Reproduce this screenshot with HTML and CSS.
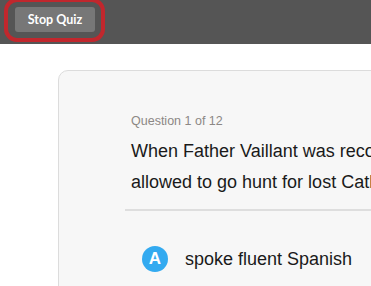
FILE: index.html
```html
<!DOCTYPE html>
<html>
<head>
<meta charset="utf-8">
<link rel="stylesheet" href="styles.css">
</head>
<body>
<header class="topbar">
  <div class="btn-wrap">
    <button class="stop-btn">Stop Quiz</button>
    <span class="highlight-ring"></span>
  </div>
</header>
<main class="stage">
  <section class="card">
    <div class="question-head">
      <div class="counter">Question 1 of 12</div>
      <div class="question">When Father Vaillant was recovering from his illness he was<br>allowed to go hunt for lost Catholics</div>
    </div>
    <div class="options">
      <div class="option">
        <span class="letter">A</span>
        <span class="answer">spoke fluent Spanish</span>
      </div>
    </div>
  </section>
</main>
</body>
</html>
```
FILE: styles.css
```css
html, body {
  margin: 0;
  padding: 0;
  background: #ffffff;
  overflow: hidden;
  width: 371px;
  height: 286px;
}
.topbar {
  height: 44px;
  background: #555555;
  display: flex;
  align-items: flex-start;
  padding: 7px 0 0 15px;
  box-sizing: border-box;
}
.btn-wrap {
  position: relative;
}
.stop-btn {
  display: block;
  width: 80px;
  height: 25px;
  border: none;
  border-radius: 3px;
  background: #777777;
  color: #ffffff;
  font-family: Lato, "Open Sans", sans-serif;
  font-weight: 700;
  font-size: 12.5px;
  padding: 0;
  margin: 0;
}
.highlight-ring {
  position: absolute;
  left: -11px;
  top: -9px;
  width: 101px;
  height: 44px;
  box-sizing: border-box;
  border: 4px solid #c1272d;
  border-radius: 13px;
}
.stage {
  padding: 26px 0 0 58px;
}
.card {
  width: 900px;
  height: 400px;
  box-sizing: border-box;
  background: #f7f7f7;
  border: 1px solid #dcdcdc;
  border-radius: 10px;
  padding: 42px 0 0 66px;
  font-family: Arimo, "Liberation Sans", Arial, sans-serif;
}
.question-head {
  padding: 0 0 11px 6px;
  border-bottom: 2px solid #dedede;
}
.counter {
  font-size: 12.5px;
  color: #8c8885;
  line-height: 16px;
  margin-bottom: 7px;
}
.question {
  font-size: 18px;
  line-height: 31px;
  color: #1a1a1a;
  white-space: nowrap;
}
.options {
  padding: 35px 0 0 17px;
}
.option {
  display: flex;
  align-items: center;
  gap: 17px;
}
.letter {
  width: 26px;
  height: 26px;
  border-radius: 50%;
  background: #33aaf0;
  color: #ffffff;
  font-weight: 700;
  font-size: 17px;
  display: flex;
  align-items: center;
  justify-content: center;
}
.answer {
  font-size: 18px;
  color: #1a1a1a;
}
```
